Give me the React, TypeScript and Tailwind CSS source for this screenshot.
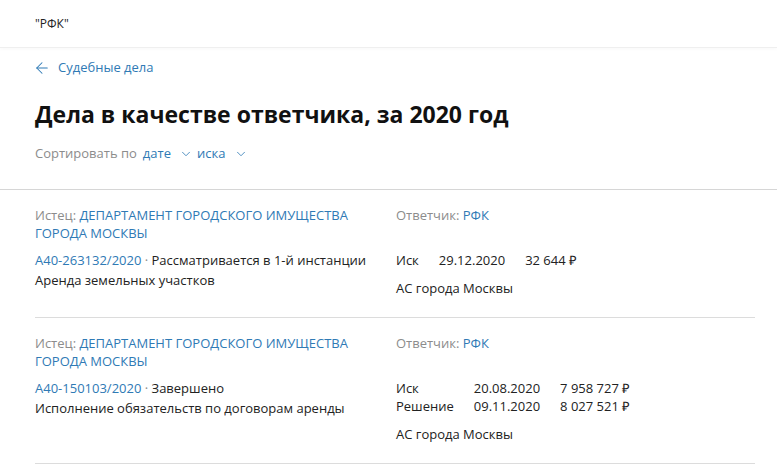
import { ArrowLeft, ChevronDown } from 'lucide-react'

type Row = { label: string; date: string; sum: string }

type Case = {
  plaintiff: string
  number: string
  status: string
  subject: string
  rows: Row[]
}

const cases: Case[] = [
  {
    plaintiff: 'ДЕПАРТАМЕНТ ГОРОДСКОГО ИМУЩЕСТВА ГОРОДА МОСКВЫ',
    number: 'А40-263132/2020',
    status: 'Рассматривается в 1-й инстанции',
    subject: 'Аренда земельных участков',
    rows: [{ label: 'Иск', date: '29.12.2020', sum: '32 644 ₽' }],
  },
  {
    plaintiff: 'ДЕПАРТАМЕНТ ГОРОДСКОГО ИМУЩЕСТВА ГОРОДА МОСКВЫ',
    number: 'А40-150103/2020',
    status: 'Завершено',
    subject: 'Исполнение обязательств по договорам аренды',
    rows: [
      { label: 'Иск', date: '20.08.2020', sum: '7 958 727 ₽' },
      { label: 'Решение', date: '09.11.2020', sum: '8 027 521 ₽' },
    ],
  },
]

function CaseCard({ item }: { item: Case }) {
  return (
    <div className="grid grid-cols-[361px_1fr] pt-4 pb-5 border-b border-[#dcdcdc]">
      <div className="pr-4">
        <p className="leading-[18px] text-[#8c8c8c]">
          Истец: <span className="text-[#2f7ab5]">{item.plaintiff}</span>
        </p>
        <p className="mt-2 leading-5 text-[#222]">
          <span className="text-[#2f7ab5]">{item.number}</span>
          <span className="text-[#8c8c8c]"> · </span>
          {item.status}
        </p>
        <p className="leading-5 text-[#222]">{item.subject}</p>
      </div>

      <div>
        <p className="leading-[18px] text-[#8c8c8c]">
          Ответчик: <span className="text-[#2f7ab5]">РФК</span>
        </p>
        <div className="mt-[27px] grid grid-cols-[auto_auto_auto] justify-start gap-x-5 leading-[18px] text-[#222]">
          {item.rows.map((r) => (
            <div key={r.label} className="contents">
              <span>{r.label}</span>
              <span>{r.date}</span>
              <span>{r.sum}</span>
            </div>
          ))}
        </div>
        <p className="mt-[10px] leading-[18px] text-[#222]">АС города Москвы</p>
      </div>
    </div>
  )
}

export default function App() {
  return (
    <div className="w-[777px] h-[465px] overflow-hidden bg-white text-[13px] font-['Open_Sans',sans-serif]">
      {/* Top bar */}
      <header className="h-[48px] flex items-center px-[35px] border-b border-[#efefef] shadow-[0_2px_3px_rgba(0,0,0,0.02)]">
        <span className="text-[12px] text-[#222]">"РФК"</span>
      </header>

      {/* Page head */}
      <div className="px-[35px]">
        <a className="flex items-center gap-[7px] h-[40px] text-[#2f7ab5]">
          <ArrowLeft className="-ml-[2px] w-[18px] h-[18px]" strokeWidth={1.4} />
          <span>Судебные дела</span>
        </a>
        <h1 className="mt-[12px] text-[23px] leading-[28px] font-bold text-[#111]">
          Дела в качестве ответчика, за 2020 год
        </h1>
        <div className="mt-[16px] flex items-center h-[20px]">
          <span className="text-[#8c8c8c]">Сортировать по</span>
          <span className="ml-[6px] text-[#2f7ab5]">дате</span>
          <ChevronDown className="ml-[8px] w-[14px] h-[14px] text-[#2f7ab5]" strokeWidth={1.4} />
          <span className="ml-[4px] text-[#2f7ab5]">иска</span>
          <ChevronDown className="ml-[9px] w-[14px] h-[14px] text-[#2f7ab5]" strokeWidth={1.4} />
        </div>
      </div>

      <div className="mt-[25px] border-t border-[#d6d6d6]">
        <div className="pl-[35px] pr-[22px]">
          {cases.map((c) => (
            <CaseCard key={c.number} item={c} />
          ))}
        </div>
      </div>
    </div>
  )
}
